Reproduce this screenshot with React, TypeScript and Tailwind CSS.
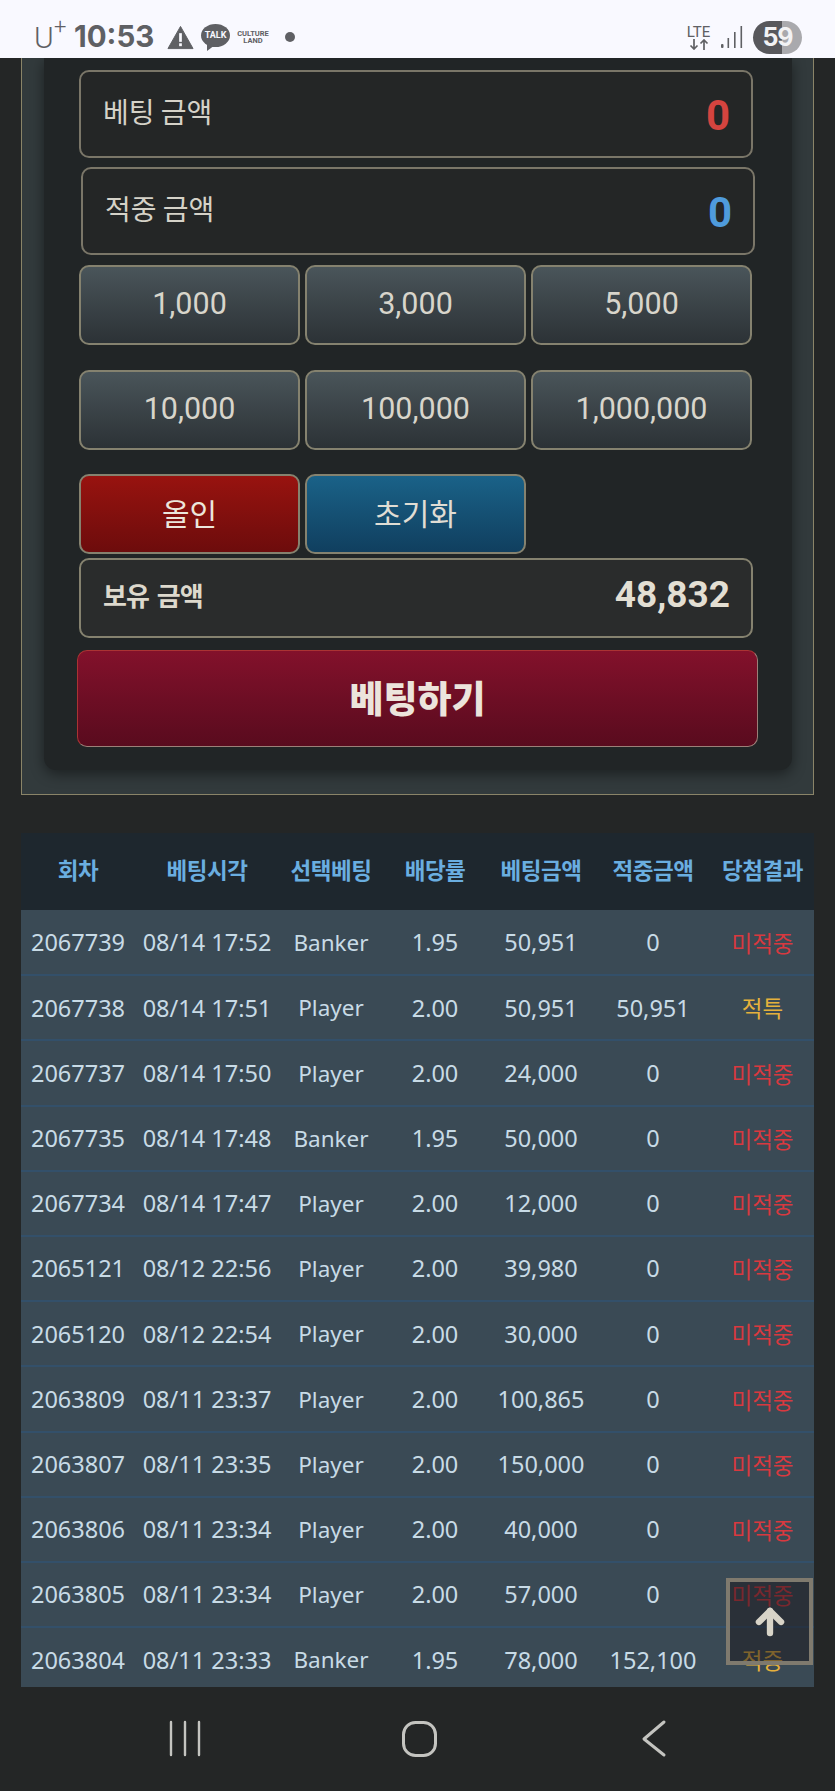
import { ArrowUp } from "lucide-react";

const rows = [
  ["2067739", "08/14 17:52", "Banker", "1.95", "50,951", "0", "미적중"],
  ["2067738", "08/14 17:51", "Player", "2.00", "50,951", "50,951", "적특"],
  ["2067737", "08/14 17:50", "Player", "2.00", "24,000", "0", "미적중"],
  ["2067735", "08/14 17:48", "Banker", "1.95", "50,000", "0", "미적중"],
  ["2067734", "08/14 17:47", "Player", "2.00", "12,000", "0", "미적중"],
  ["2065121", "08/12 22:56", "Player", "2.00", "39,980", "0", "미적중"],
  ["2065120", "08/12 22:54", "Player", "2.00", "30,000", "0", "미적중"],
  ["2063809", "08/11 23:37", "Player", "2.00", "100,865", "0", "미적중"],
  ["2063807", "08/11 23:35", "Player", "2.00", "150,000", "0", "미적중"],
  ["2063806", "08/11 23:34", "Player", "2.00", "40,000", "0", "미적중"],
  ["2063805", "08/11 23:34", "Player", "2.00", "57,000", "0", "미적중"],
  ["2063804", "08/11 23:33", "Banker", "1.95", "78,000", "152,100", "적중"],
];

const headers = ["회차", "베팅시각", "선택베팅", "배당률", "베팅금액", "적중금액", "당첨결과"];
const colWidths = [114, 144, 104, 104, 108, 116, 103];

function StatusBar() {
  return (
    <div className="h-[58px] shrink-0 bg-[#f9f9ff] flex items-start justify-between pl-[34px] pr-[33px] text-[#5f6064]">
      <div className="flex items-center h-[58px] pt-[16px]">
        <span className="text-[30px] leading-none font-light font-['Roboto',sans-serif] relative w-[40px] pt-[2px]">
          U<span className="absolute left-[20px] top-[-5px] text-[22px]">+</span>
        </span>
        <span className="w-[93px] text-[29.5px] leading-none font-bold font-['Inter','Roboto',sans-serif]">10:53</span>
        <svg width="27" height="25" viewBox="0 0 28 25" className="mr-[7px]">
          <path d="M14 1 L27 24 H1 Z" fill="#5f6064" stroke="#5f6064" strokeWidth="1" strokeLinejoin="round" />
          <rect x="12.6" y="8" width="2.8" height="9" fill="#f9f9ff" />
          <rect x="12.6" y="18.5" width="2.8" height="3" fill="#f9f9ff" />
        </svg>
        <span className="relative w-[29px] h-[27px] mr-[7px]">
          <svg width="29" height="27" viewBox="0 0 29 27">
            <ellipse cx="14.5" cy="11.5" rx="14.5" ry="11.5" fill="#5f6064" />
            <path d="M6 20 L6 27 L14 21 Z" fill="#5f6064" />
          </svg>
          <span className="absolute inset-x-0 top-[6px] text-center text-[9px] leading-[11px] font-bold text-[#f9f9ff] font-['Roboto',sans-serif]">
            TALK
          </span>
        </span>
        <span className="w-[32px] text-center text-[7.5px] leading-[7px] font-bold font-['Roboto',sans-serif] mr-[16px]">
          CULTURE
          <br />
          LAND
        </span>
        <span className="w-[10px] h-[10px] rounded-full bg-[#5f6064]" />
      </div>
      <div className="flex items-center h-[58px] pt-[16px]">
        <span className="flex flex-col items-center mr-[9px] w-[27px]">
          <span className="text-[15px] leading-[14px] font-normal font-['Roboto',sans-serif]">LTE</span>
          <svg width="20" height="11" viewBox="0 0 20 11" fill="none" stroke="#5f6064" strokeWidth="1.7">
            <path d="M5 0 V10 M1.5 6.5 L5 10 L8.5 6.5" />
            <path d="M15 11 V1 M11.5 4.5 L15 1 L18.5 4.5" />
          </svg>
        </span>
        <svg width="22" height="22" viewBox="0 0 22 22" className="mr-[10px]" fill="#5f6064">
          <rect x="0" y="18" width="2.5" height="4" rx="1" />
          <rect x="6.5" y="12" width="1.6" height="10" />
          <rect x="13" y="6" width="1.6" height="16" />
          <rect x="19.5" y="0" width="1.6" height="22" />
        </svg>
        <span className="w-[49px] h-[33px] rounded-full overflow-hidden bg-[linear-gradient(90deg,#58585c_0%,#58585c_59%,#a9a9ad_59%,#a9a9ad_100%)] text-center text-[25px] leading-[33px] font-bold text-[#f2f2f4] font-['Inter','Roboto',sans-serif] tracking-[-1px]">
          59
        </span>
      </div>
    </div>
  );
}

function AmountBox({ label, color, shift }: { label: string; color: string; shift: string }) {
  return (
    <div className={`w-[674px] h-[88px] rounded-[10px] border-2 border-[#7a7668] bg-[#242626] flex justify-between pl-[22px] pr-[21px] ${shift}`}>
      <span className="text-[28px] leading-none pt-[25px] text-[#d5d2c8] font-['Noto_Sans_CJK_KR',sans-serif]">{label}</span>
      <span className={`text-[42px] leading-none pt-[23px] font-bold font-['Roboto',sans-serif] ${color}`}>0</span>
    </div>
  );
}

function ChipButton({ label }: { label: string }) {
  return (
    <button className="h-[80px] pb-[2px] rounded-[10px] border-2 border-[#85826f] bg-gradient-to-b from-[#4a555a] to-[#2c3236] text-[30.5px] text-[#d8d5cb] font-['Roboto',sans-serif]">
      {label}
    </button>
  );
}

function BetPanel() {
  return (
    <div className="mx-[21px] w-[793px] border-x border-b border-[#8a8468] bg-[#323a3c] pl-[22px] pr-[21px] pb-[24px]">
      <div className="w-[748px] rounded-b-[12px] bg-[#212526] pl-[35px] pt-[12px] pb-[23px] shadow-[0_4px_14px_rgba(0,0,0,0.45)]">
        <AmountBox label="베팅 금액" color="text-[#d4443f]" shift="" />
        <AmountBox label="적중 금액" color="text-[#4f9bdc]" shift="ml-[2px] mt-[9px]" />
        <div className="grid grid-cols-3 gap-x-[5px] w-[673px] mt-[10px]">
          <ChipButton label="1,000" />
          <ChipButton label="3,000" />
          <ChipButton label="5,000" />
        </div>
        <div className="grid grid-cols-3 gap-x-[5px] w-[673px] mt-[25px]">
          <ChipButton label="10,000" />
          <ChipButton label="100,000" />
          <ChipButton label="1,000,000" />
        </div>
        <div className="grid grid-cols-3 gap-x-[5px] w-[673px] mt-[24px]">
          <button className="h-[80px] pb-[3px] rounded-[10px] border-2 border-[#85826f] bg-gradient-to-b from-[#98130f] to-[#6d0c0c] text-[30px] text-[#ece6dc] font-['Noto_Sans_CJK_KR',sans-serif]">
            올인
          </button>
          <button className="h-[80px] pb-[3px] rounded-[10px] border-2 border-[#85826f] bg-gradient-to-b from-[#1a6288] to-[#103f5f] text-[30px] text-[#e0ddd4] font-['Noto_Sans_CJK_KR',sans-serif]">
            초기화
          </button>
        </div>
        <div className="w-[674px] h-[80px] mt-[4px] pb-[7px] rounded-[10px] border-2 border-[#85826f] bg-[#2a2c2c] flex items-center justify-between pl-[22px] pr-[21px]">
          <span className="text-[26px] font-bold tracking-[-1px] [word-spacing:3px] text-[#ddd9cd] font-['Noto_Sans_CJK_KR',sans-serif]">보유 금액</span>
          <span className="text-[37px] font-bold text-[#e3dfd3] font-['Roboto',sans-serif]">48,832</span>
        </div>
        <button className="-ml-[2px] mt-[12px] w-[681px] h-[97px] pb-[2px] rounded-[10px] border-[1.5px] border-[#a33] border-b-[#9c8078] border-r-[#9c8078] bg-gradient-to-b from-[#83112b] to-[#590b1e] text-[37px] font-black text-[#ece4dc] font-['Noto_Sans_CJK_KR',sans-serif]">
          베팅하기
        </button>
      </div>
    </div>
  );
}

function HistoryTable() {
  return (
    <table className="ml-[21px] mt-[38px] w-[793px] table-fixed border-collapse font-['Noto_Sans','Noto_Sans_CJK_KR',sans-serif]">
      <colgroup>
        {colWidths.map((w, i) => (
          <col key={i} width={w} />
        ))}
      </colgroup>
      <thead>
        <tr className="h-[77px] bg-[#1e272e]">
          {headers.map(h => (
            <th key={h} className="pb-[4px] text-center text-[22.5px] font-bold text-[#6aaee0] font-['Noto_Sans_CJK_KR',sans-serif] tracking-[-0.5px] whitespace-nowrap">
              {h}
            </th>
          ))}
        </tr>
      </thead>
      <tbody>
        {rows.map(row => (
          <tr key={row[0]} className="h-[65.2px] bg-[#3a4a55] border-b-2 border-[#33506a]">
            {row.map((cell, i) => {
              let color = "text-[#c8dbe6]";
              if (i === 6) color = cell === "미적중" ? "text-[#d8393f]" : "text-[#e5b13c]";
              let size = "text-[23.5px]";
              if (i === 2) size = "text-[22.5px]";
              if (i === 6) size = "text-[22.5px] font-['Noto_Sans_CJK_KR',sans-serif]";
              return (
                <td key={i} className={`text-center whitespace-nowrap p-0 pt-[1px] ${color} ${size}`}>
                  {cell}
                </td>
              );
            })}
          </tr>
        ))}
      </tbody>
    </table>
  );
}

function NavBar() {
  return (
    <div className="h-[104px] shrink-0 bg-[#242626]">
      <svg width="835" height="104" viewBox="0 0 835 104" fill="none" stroke="#c4c4c0" strokeWidth="2.4" strokeLinecap="round" strokeLinejoin="round">
        <path d="M171 35 V68 M185 35 V68 M199 35 V68" />
        <rect x="403.5" y="35.5" width="32" height="33" rx="12" strokeWidth="3" />
        <path d="M664 35 L644 52 L664 68" strokeWidth="3" />
      </svg>
    </div>
  );
}

export default function App() {
  return (
    <div className="relative w-[835px] h-[1791px] overflow-hidden bg-[#242626] flex flex-col">
      <StatusBar />
      <div className="flex-1 overflow-hidden">
        <BetPanel />
        <HistoryTable />
      </div>
      <NavBar />
      <button className="absolute left-[726px] top-[1578px] w-[87px] h-[87px] border-[4px] border-[#7f7a6e] bg-[#1a161b]/50 flex items-center justify-center">
        <ArrowUp className="w-[38px] h-[38px] text-[#d8d4c8]" strokeWidth={4} />
      </button>
    </div>
  );
}
